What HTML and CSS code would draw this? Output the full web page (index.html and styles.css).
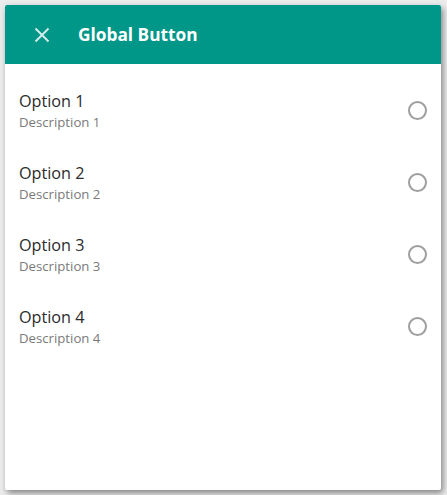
FILE: index.html
```html
<!DOCTYPE html>
<html>
<head>
<meta charset="utf-8">
<link rel="stylesheet" href="styles.css">
</head>
<body>
<div class="dialog">
  <header class="bar">
    <button class="close" aria-label="Close">
      <svg width="16" height="16" viewBox="0 0 16 16"><path d="M1.5 1.5 L14.5 14.5 M14.5 1.5 L1.5 14.5" stroke="#fff" stroke-width="2" fill="none" opacity="0.82"/></svg>
    </button>
    <h1 class="title">Global Button</h1>
  </header>
  <ul class="list">
    <li class="item"><div class="text"><div class="label">Option 1</div><div class="desc">Description 1</div></div><span class="radio"></span></li>
    <li class="item"><div class="text"><div class="label">Option 2</div><div class="desc">Description 2</div></div><span class="radio"></span></li>
    <li class="item"><div class="text"><div class="label">Option 3</div><div class="desc">Description 3</div></div><span class="radio"></span></li>
    <li class="item"><div class="text"><div class="label">Option 4</div><div class="desc">Description 4</div></div><span class="radio"></span></li>
  </ul>
</div>
</body>
</html>
```
FILE: styles.css
```css
html, body { margin: 0; padding: 0; }
body {
  background: #ececec;
  width: 447px;
  height: 495px;
  overflow: hidden;
  font-family: "Open Sans", "Noto Sans", sans-serif;
  padding: 5px 0 0 5px;
  box-sizing: border-box;
}
.dialog {
  width: 436px;
  height: 485px;
  background: #fff;
  border-radius: 2px;
  box-shadow: 2px 3px 6px rgba(0,0,0,0.45);
  overflow: hidden;
}
.bar {
  height: 59px;
  background: #009688;
  display: flex;
  align-items: center;
}
.close {
  background: none;
  border: 0;
  padding: 0;
  margin-left: 29px;
  margin-top: 1px;
  width: 16px;
  height: 16px;
  display: flex;
}
.title {
  margin: 0 0 0 28px;
  color: #fff;
  font-size: 17.3px;
  font-weight: 700;
}
.list {
  list-style: none;
  margin: 0;
  padding: 10px 0 0 0;
}
.item {
  height: 72px;
  display: flex;
  align-items: center;
  padding: 0 14px 0 14px;
}
.text { flex: 1; }
.label {
  font-size: 16.2px;
  line-height: 23px;
  color: #2b2b2b;
}
.desc {
  font-size: 13.2px;
  line-height: 18px;
  color: #7a7a7a;
}
.radio {
  width: 15px;
  height: 15px;
  border: 2px solid #9e9e9e;
  border-radius: 50%;
}
```
